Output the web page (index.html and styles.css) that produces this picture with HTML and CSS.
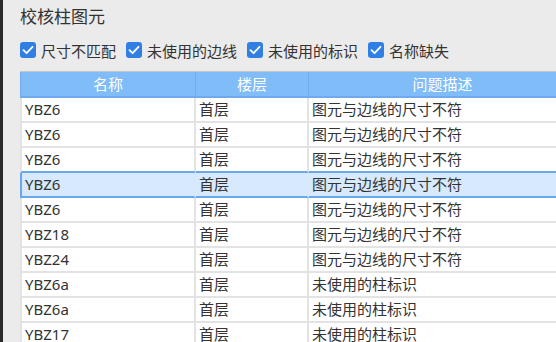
FILE: index.html
```html
<!DOCTYPE html>
<html lang="zh">
<head>
    <meta charset="UTF-8">
    <title>校核柱图元</title>
    <link rel="stylesheet" href="styles.css">
</head>
<body>
    <div class="dialog">
        <div class="title">校核柱图元</div>
        <div class="options">
            <label class="check"><span class="box"><svg viewBox="0 0 16 16"><path d="M3.5 8.2 L6.6 11.2 L12.5 4.8" /></svg></span>尺寸不匹配</label>
            <label class="check"><span class="box"><svg viewBox="0 0 16 16"><path d="M3.5 8.2 L6.6 11.2 L12.5 4.8" /></svg></span>未使用的边线</label>
            <label class="check"><span class="box"><svg viewBox="0 0 16 16"><path d="M3.5 8.2 L6.6 11.2 L12.5 4.8" /></svg></span>未使用的标识</label>
            <label class="check"><span class="box"><svg viewBox="0 0 16 16"><path d="M3.5 8.2 L6.6 11.2 L12.5 4.8" /></svg></span>名称缺失</label>
        </div>
        <div class="grid">
            <div class="row head">
                <div class="cell">名称</div>
                <div class="cell">楼层</div>
                <div class="cell">问题描述</div>
            </div>
            <div class="row"><div class="cell">YBZ6</div><div class="cell">首层</div><div class="cell">图元与边线的尺寸不符</div></div>
            <div class="row"><div class="cell">YBZ6</div><div class="cell">首层</div><div class="cell">图元与边线的尺寸不符</div></div>
            <div class="row before-sel"><div class="cell">YBZ6</div><div class="cell">首层</div><div class="cell">图元与边线的尺寸不符</div></div>
            <div class="row selected"><div class="cell">YBZ6</div><div class="cell">首层</div><div class="cell">图元与边线的尺寸不符</div></div>
            <div class="row"><div class="cell">YBZ6</div><div class="cell">首层</div><div class="cell">图元与边线的尺寸不符</div></div>
            <div class="row"><div class="cell">YBZ18</div><div class="cell">首层</div><div class="cell">图元与边线的尺寸不符</div></div>
            <div class="row"><div class="cell">YBZ24</div><div class="cell">首层</div><div class="cell">图元与边线的尺寸不符</div></div>
            <div class="row"><div class="cell">YBZ6a</div><div class="cell">首层</div><div class="cell">未使用的柱标识</div></div>
            <div class="row"><div class="cell">YBZ6a</div><div class="cell">首层</div><div class="cell">未使用的柱标识</div></div>
            <div class="row"><div class="cell">YBZ17</div><div class="cell">首层</div><div class="cell">未使用的柱标识</div></div>
        </div>
    </div>
</body>
</html>
```

FILE: styles.css
```css
/* dialog: check column elements */
body {
    margin: 0;
    overflow: hidden;
    font-family: "Noto Sans", "Noto Sans CJK SC", sans-serif;
    color: #333;
    background: #ebebeb;
}
.dialog {
    height: 342px;
    padding-left: 17px;
    border-left: 3px solid #2a2a2a;
    background: #ebebeb;
}
.title {
    padding-top: 6px;
    line-height: 22px;
    font-size: 17px;
}
.options {
    display: flex;
    align-items: center;
    margin-top: 11px;
    height: 22px;
    font-size: 15px;
    white-space: nowrap;
}
.check {
    display: flex;
    align-items: center;
    margin-right: 10px;
}
.box {
    width: 16px;
    height: 16px;
    margin-right: 5px;
    border-radius: 3px;
    background: #2f7fe4;
    display: flex;
}
.box svg {
    width: 16px;
    height: 16px;
}
.box path {
    fill: none;
    stroke: #fff;
    stroke-width: 1.8;
    stroke-linecap: round;
    stroke-linejoin: round;
}
.grid {
    margin-top: 10px;
    width: 557px;
    font-size: 15px;
}
.row {
    display: grid;
    grid-template-columns: 176px 113px 268px;
    height: 25px;
}
.cell {
    box-sizing: border-box;
    padding-left: 3px;
    line-height: 23px;
    border-right: 2px solid #e3e3e3;
    border-bottom: 2px solid #e3e3e3;
    background: #fff;
    white-space: nowrap;
    overflow: hidden;
}
.row .cell:first-child {
    border-left: 2px solid #e3e3e3;
}
.head {
    height: 27px;
    border-top: 1px solid #c6c6c6;
    box-sizing: border-box;
}
.head .cell,
.head .cell:first-child {
    background: #80bcf8;
    color: #fff;
    text-align: center;
    padding-left: 0;
    line-height: 24px;
    border-left: none;
    border-right: 1px solid #70acef;
    border-bottom: 2px solid #6faaee;
}
.head .cell:first-child {
    border-left: 1px solid #70acef;
}
.before-sel .cell {
    border-bottom-color: #6aa6ea;
}
.selected .cell {
    background: #d6e9fd;
    border-bottom-color: #6aa6ea;
    border-right-color: #d6e9fd;
}
.selected .cell:first-child {
    border-left-color: #6aa6ea;
}
```
